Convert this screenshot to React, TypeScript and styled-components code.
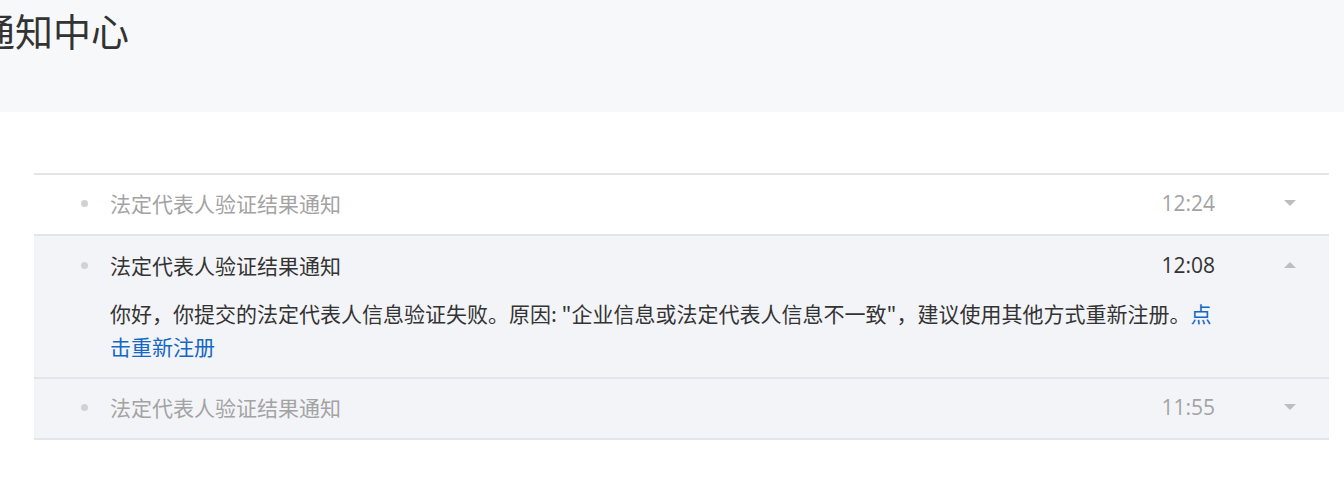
import React from "react";
import styled, { createGlobalStyle } from "styled-components";

const GlobalStyle = createGlobalStyle`
  html, body { margin: 0; padding: 0; background: #ffffff; overflow: hidden; }
  body { font-family: "Noto Sans CJK SC", "Noto Sans", sans-serif; }
`;

const Page = styled.div`
  width: 1344px;
  min-height: 486px;
  background: #ffffff;
`;

const Header = styled.header`
  height: 112px;
  background: #f7f8fa;
  box-sizing: border-box;
  padding-top: 10px;
  overflow: hidden;
`;

const Title = styled.h1`
  margin: 0 0 0 -23px;
  font-size: 38px;
  line-height: 40px;
  font-weight: 400;
  color: #333333;
  white-space: nowrap;
`;

const List = styled.ul`
  list-style: none;
  margin: 61px 0 0 34px;
  padding: 0;
  width: 1295px;
  border-top: 2px solid #e4e5ea;
`;

const Item = styled.li<{ $shaded: boolean }>`
  background: ${(p) => (p.$shaded ? "#f3f4f8" : "#ffffff")};
  border-bottom: 2px solid #e4e5ea;
`;

const ItemHead = styled.div<{ $tall: boolean }>`
  display: flex;
  align-items: center;
  box-sizing: border-box;
  height: ${(p) => (p.$tall ? "61px" : "59px")};
  padding: 0 0 3px 47px;
`;

const Dot = styled.span`
  width: 7px;
  height: 7px;
  border-radius: 50%;
  background: #d2d2d2;
  flex: none;
  margin-right: 22px;
`;

const ItemTitle = styled.span<{ $active: boolean }>`
  flex: 1;
  font-size: 21px;
  color: ${(p) => (p.$active ? "#333333" : "#a3a3a3")};
`;

const Time = styled.span<{ $active: boolean }>`
  font-family: "Open Sans", "Noto Sans", sans-serif;
  font-size: 21px;
  color: ${(p) => (p.$active ? "#333333" : "#a3a3a3")};
`;

const Caret = styled.span<{ $up: boolean }>`
  width: 0;
  height: 0;
  margin-left: 69px;
  margin-right: 33px;
  border-left: 6px solid transparent;
  border-right: 6px solid transparent;
  ${(p) =>
    p.$up
      ? "border-bottom: 6px solid #bdbdbd; border-top: 0;"
      : "border-top: 6px solid #bdbdbd; border-bottom: 0;"}
`;

const Body = styled.p`
  margin: 0;
  padding: 0 114px 14px 76px;
  font-size: 21px;
  line-height: 33px;
  color: #333333;
`;

const Link = styled.a`
  color: #1467c4;
  text-decoration: none;
`;

type Notice = {
  title: string;
  time: string;
  open: boolean;
  shaded: boolean;
};

const notices: Notice[] = [
  { title: "法定代表人验证结果通知", time: "12:24", open: false, shaded: false },
  { title: "法定代表人验证结果通知", time: "12:08", open: true, shaded: true },
  { title: "法定代表人验证结果通知", time: "11:55", open: false, shaded: true },
];

export default function App() {
  return (
    <Page>
      <GlobalStyle />
      <Header>
        <Title>通知中心</Title>
      </Header>
      <List>
        {notices.map((n, i) => (
          <Item key={i} $shaded={n.shaded}>
            <ItemHead $tall={n.open}>
              <Dot />
              <ItemTitle $active={n.open}>{n.title}</ItemTitle>
              <Time $active={n.open}>{n.time}</Time>
              <Caret $up={n.open} />
            </ItemHead>
            {n.open && (
              <Body>
                你好，你提交的法定代表人信息验证失败。原因: "企业信息或法定代表人信息不一致"，建议使用其他方式重新注册。
                <Link href="#">点击重新注册</Link>
              </Body>
            )}
          </Item>
        ))}
      </List>
    </Page>
  );
}
